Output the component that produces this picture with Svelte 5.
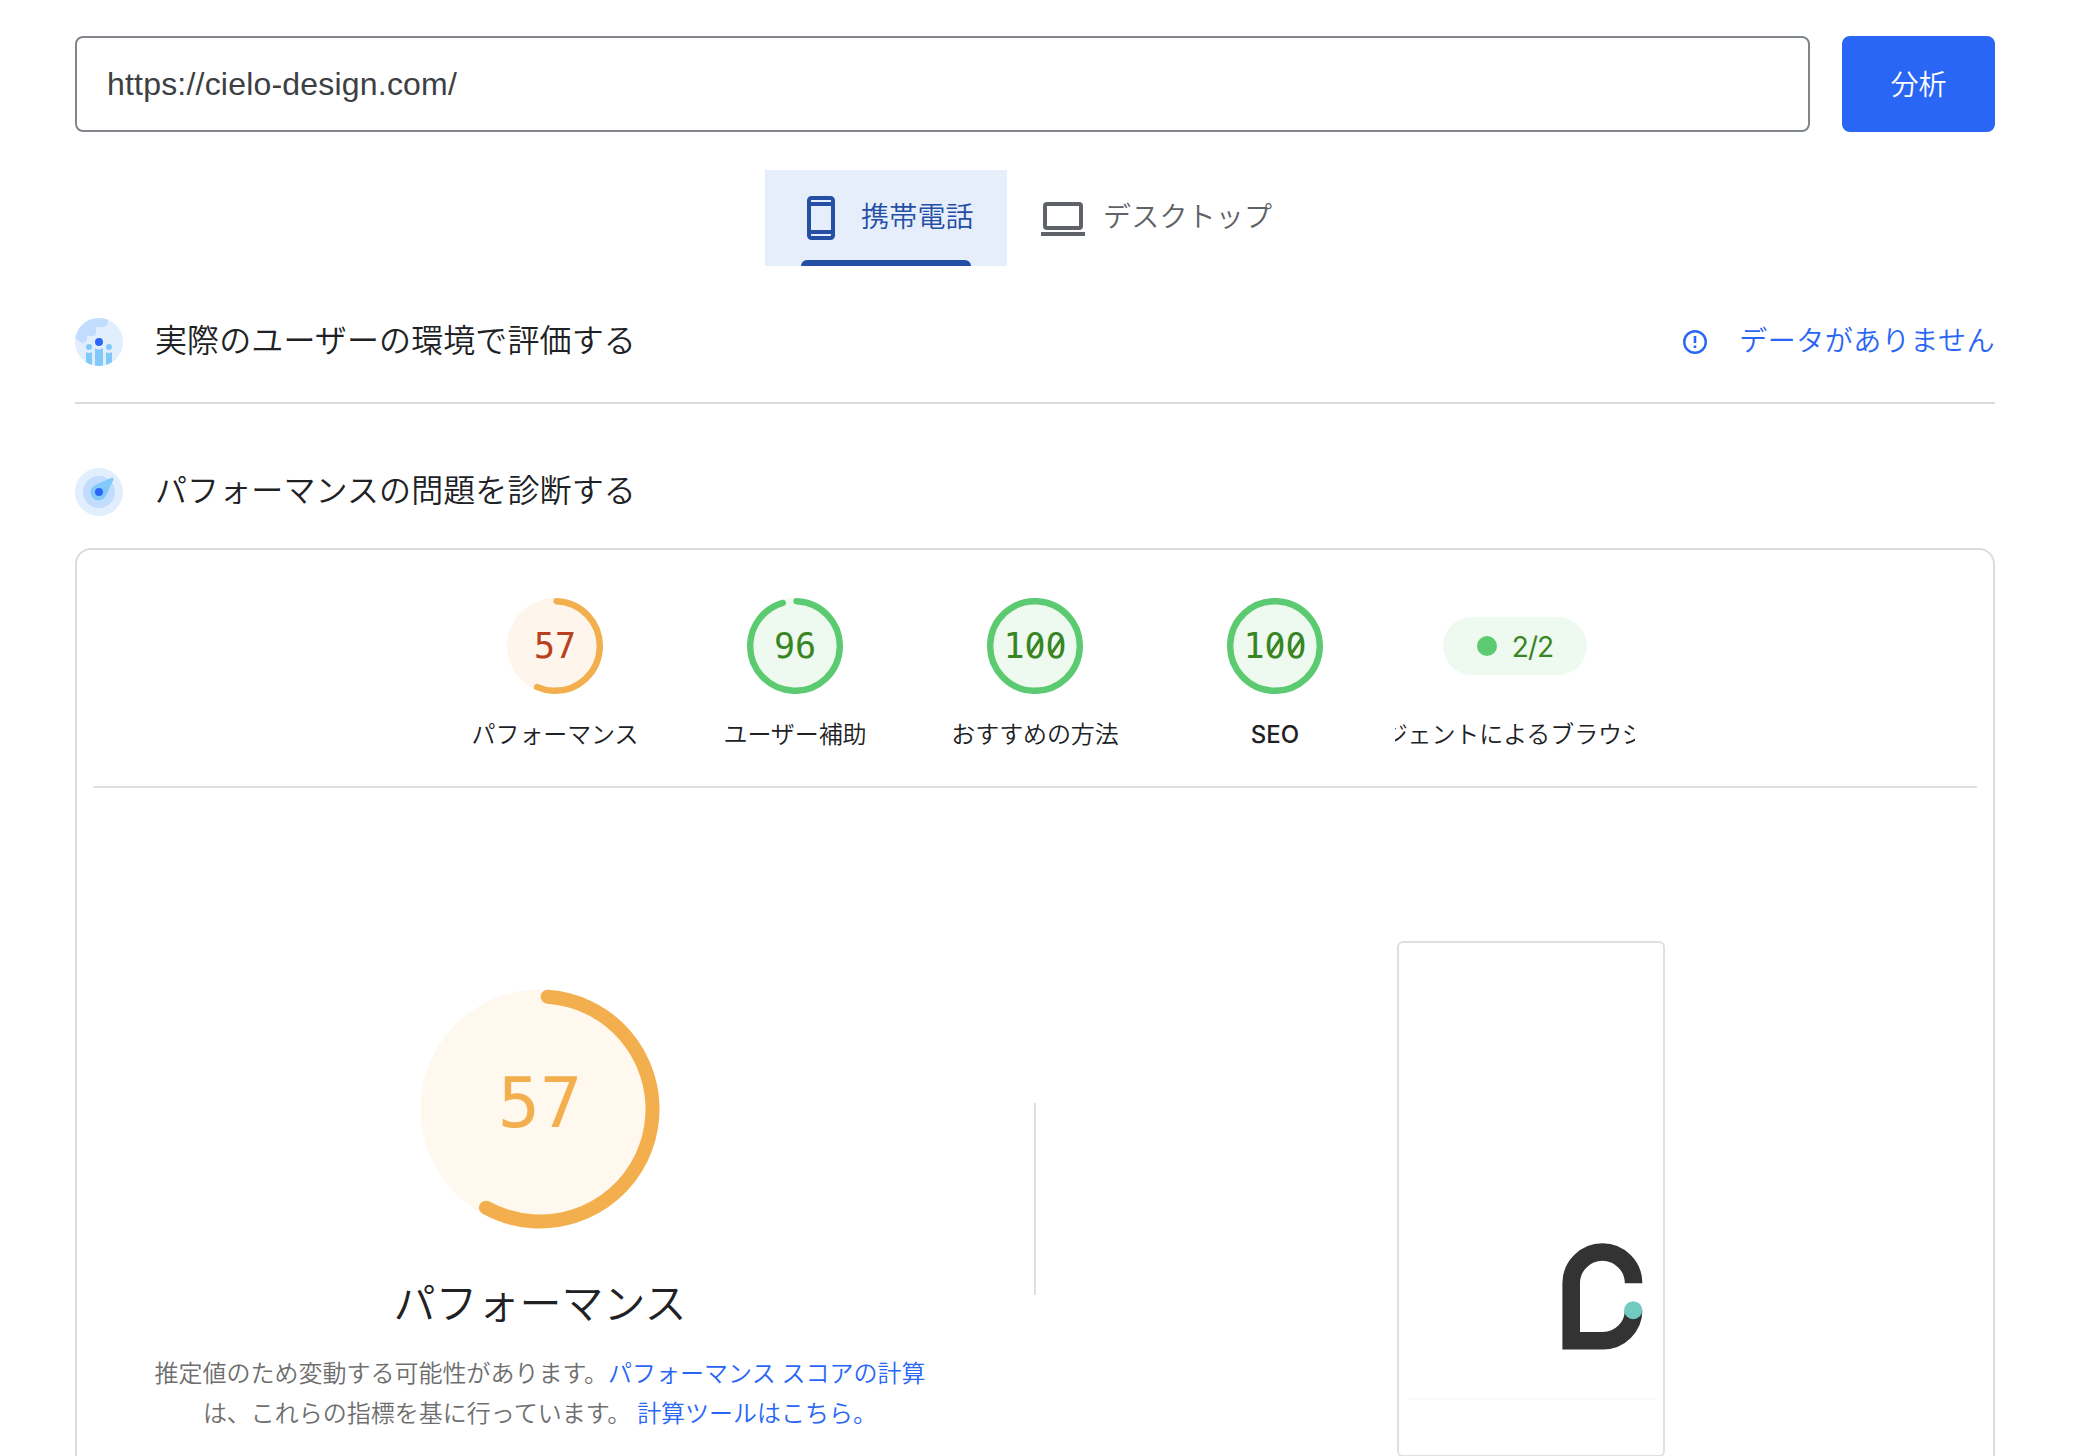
<script>
  const url = 'https://cielo-design.com/';

  const categories = [
    { label: 'パフォーマンス', score: 57 },
    { label: 'ユーザー補助', score: 96 },
    { label: 'おすすめの方法', score: 100 },
    { label: 'SEO', score: 100 },
    { label: 'エージェントによるブラウジング', fraction: '2/2' },
  ];

  const radius = 56;
  const strokeWidth = 8;
  const circumference = 2 * Math.PI * radius;
  const rotation = -90 + ((0.25 * strokeWidth) / circumference) * 360;

  function arcLength(score) {
    if (score === 100) return circumference;
    return (score / 100) * circumference - strokeWidth / 2;
  }

  function rating(score) {
    return score >= 90 ? 'pass' : 'average';
  }
</script>

<main>
  <form class="search">
    <div class="url">{url}</div>
    <button type="button">分析</button>
  </form>

  <nav class="tabs">
    <div class="tab active">
      <svg width="28" height="44" viewBox="0 0 28 44">
        <rect x="2" y="2" width="24" height="40" rx="2.5" fill="none" stroke="currentColor" stroke-width="4" />
        <path d="M2 8h24M2 36h24" stroke="currentColor" stroke-width="4" />
      </svg>
      <span>携帯電話</span>
    </div>
    <div class="tab">
      <svg width="44" height="34" viewBox="0 0 44 34">
        <rect x="4" y="2" width="36" height="24" rx="2" fill="none" stroke="currentColor" stroke-width="4" />
        <path d="M0 32h44" stroke="currentColor" stroke-width="4" />
      </svg>
      <span>デスクトップ</span>
    </div>
  </nav>

  <section class="heading field">
    <svg class="badge" viewBox="0 0 48 48">
      <clipPath id="disc"><circle cx="24" cy="24" r="24" /></clipPath>
      <g clip-path="url(#disc)">
        <rect width="48" height="48" fill="#e1eefe" />
        <path d="M0 0h33v3q0 6-6 6h-6v5q0 4-4 4h-5v4l-4 4L0 20z" fill="#c1dcfc" />
        <g fill="#81c9fa">
          <circle cx="14" cy="29" r="3" />
          <circle cx="34" cy="29" r="3" />
          <path d="M11 34q3 2 6 0v14h-6zM31 34q3 2 6 0v14h-6zM20 30q4 3 8 0v18h-8z" />
        </g>
        <circle cx="24" cy="24" r="4" fill="#2a66f8" />
      </g>
    </svg>
    <h2>実際のユーザーの環境で評価する</h2>
    <div class="no-data">
      <svg width="24" height="24" viewBox="0 0 24 24">
        <circle cx="12" cy="12" r="10.8" fill="none" stroke="currentColor" stroke-width="2.4" />
        <path d="M12 6v7M12 15.6v2.4" stroke="currentColor" stroke-width="2.6" />
      </svg>
      <span>データがありません</span>
    </div>
  </section>

  <section class="heading lab">
    <svg class="badge" viewBox="0 0 48 48">
      <circle cx="24" cy="24" r="24" fill="#e1eefe" />
      <circle cx="24" cy="24" r="16" fill="#c1dcfc" />
      <path d="M38.5 11.4L31 27.5A8 8 0 1 1 20.5 17L36.5 9.8q2.4-.8 2 1.6z" fill="#81c9fa" />
      <circle cx="24" cy="24" r="4" fill="#2a66f8" />
    </svg>
    <h2>パフォーマンスの問題を診断する</h2>
  </section>

  <section class="report">
    <div class="scores">
      {#each categories as category}
        <div class="category">
          {#if category.fraction}
            <div class="fraction"><i></i><span>{category.fraction}</span></div>
          {:else}
            <div class="gauge {rating(category.score)}">
              <svg viewBox="0 0 120 120">
                <circle class="base" cx="60" cy="60" r="60" />
                <circle
                  class="arc"
                  cx="60"
                  cy="60"
                  r={radius}
                  stroke-dasharray="{arcLength(category.score)} {circumference}"
                  transform="rotate({rotation} 60 60)"
                />
              </svg>
              <div class="number">
                {#each String(category.score) as digit}
                  <span class:zero={digit === '0'}>{digit}</span>
                {/each}
              </div>
            </div>
          {/if}
          <div class="label"><span>{category.label}</span></div>
        </div>
      {/each}
    </div>

    <div class="overview">
      <div class="performance">
        <div class="main-gauge">
          <svg viewBox="0 0 240 240">
            <circle cx="120" cy="120" r="119.5" fill="#fff8ee" />
            <circle
              class="arc"
              cx="120"
              cy="120"
              r="112.5"
              stroke-dasharray="401.8 707"
              transform="rotate(-86.1 120 120)"
            />
          </svg>
          <div class="main-number">57</div>
        </div>
        <h3>パフォーマンス</h3>
        <p>
          推定値のため変動する可能性があります。<a href="#score">パフォーマンス スコアの計算</a><br />は、これらの指標を基に行っています。 <a href="#calc">計算ツールはこちら。</a>
        </p>
      </div>
      <div class="divider"></div>
      <div class="preview">
        <svg class="screenshot" viewBox="0 0 264 512">
          <path d="M9 455.5h248" stroke="#f9f9f9" stroke-width="2" />
          <path
            d="M234.6 340.2a31.2 31.2 0 0 0-62.4 0V397.7H204a30.6 30.6 0 0 0 30.6-30.5"
            fill="none"
            stroke="#333"
            stroke-width="17.6"
          />
          <circle cx="234.2" cy="367.2" r="9" fill="#72cbc0" />
        </svg>
      </div>
    </div>
  </section>
</main>

<style>
  :global(body) {
    background: #fff;
    overflow: hidden;
  }

  main {
    box-sizing: border-box;
    width: 2082px;
    height: 1456px;
    padding: 36px 87px 0 75px;
    overflow: hidden;
    color: #202124;
    font-family: Roboto, 'Noto Sans CJK JP', sans-serif;
    font-weight: 350;
  }

  .search {
    display: flex;
    gap: 32px;
    height: 96px;
  }

  .url {
    box-sizing: border-box;
    flex: 1;
    padding: 0 30px;
    border: 2px solid #80868b;
    border-radius: 8px;
    color: #3c4043;
    font: 400 32px/92px 'Liberation Sans', Arial, sans-serif;
    letter-spacing: 0.2px;
  }

  button {
    width: 153px;
    padding: 0 0 2px;
    border: 0;
    border-radius: 8px;
    background: #2a66f6;
    color: #fff;
    font: inherit;
    font-size: 28px;
  }

  .tabs {
    display: flex;
    justify-content: center;
    margin-top: 38px;
    height: 96px;
  }

  .tab {
    position: relative;
    box-sizing: border-box;
    display: flex;
    align-items: center;
    width: 298px;
    padding-left: 34px;
    color: #5f6368;
    font-size: 28px;
    letter-spacing: 0.2px;
  }

  .tab svg {
    margin-top: 2px;
  }

  .tab span {
    height: 96px;
    margin-left: 18px;
    line-height: 96px;
  }

  .tab.active {
    width: 242px;
    padding-left: 42px;
    background: #e6eefb;
    color: #254fa5;
  }

  .tab.active svg {
    margin-top: 0;
  }

  .tab.active span {
    margin-left: 26px;
  }

  .tab.active::after {
    content: '';
    position: absolute;
    left: 36px;
    right: 36px;
    bottom: 0;
    height: 6px;
    border-radius: 6px 6px 0 0;
    background: #254fa5;
  }

  .heading {
    display: flex;
    align-items: center;
  }

  .field {
    box-sizing: border-box;
    height: 138px;
    padding-top: 16px;
    border-bottom: 2px solid #dadce0;
  }

  .lab {
    height: 48px;
    margin-top: 64px;
  }

  .badge {
    width: 48px;
    height: 48px;
  }

  h2 {
    margin: 0 0 2px 32px;
    font-size: 32px;
    font-weight: 350;
    letter-spacing: 0.1px;
    line-height: 48px;
  }

  .no-data {
    display: flex;
    align-items: center;
    gap: 32px;
    margin-left: auto;
    color: #2a66f6;
    font-size: 28px;
    letter-spacing: 0.5px;
  }

  .no-data span {
    padding-bottom: 6px;
  }

  .report {
    box-sizing: border-box;
    height: 1000px;
    margin-top: 32px;
    border: 2px solid #dadce0;
    border-radius: 16px;
    padding: 0 16px;
  }

  .scores {
    display: flex;
    justify-content: center;
    box-sizing: border-box;
    height: 238px;
    padding-top: 48px;
    border-bottom: 2px solid #e0e0e0;
  }

  .category {
    display: flex;
    flex-direction: column;
    align-items: center;
    width: 240px;
  }

  .gauge {
    position: relative;
    width: 96px;
    height: 96px;
    --tone: #5bca70;
    --fill: #eef9f0;
    color: #388523;
  }

  .gauge.average {
    --tone: #f3ae4e;
    --fill: #fef6ec;
    color: #b9401c;
  }

  svg {
    display: block;
    flex: none;
  }

  .base {
    fill: var(--fill);
  }

  .arc {
    fill: none;
    stroke: var(--tone);
    stroke-width: 8;
    stroke-linecap: round;
  }

  .number,
  .main-number {
    position: absolute;
    inset: 0;
    display: flex;
    justify-content: center;
    font-family: 'DejaVu Sans Mono', monospace;
    font-weight: 400;
  }

  .number {
    font-size: 35px;
    line-height: 97px;
  }

  .zero {
    position: relative;
  }

  /* slashed zero: hide the dot, then draw the stroke across the counter */
  .zero::before {
    content: '';
    position: absolute;
    left: 6.5px;
    top: 39px;
    width: 8px;
    height: 18px;
    border-radius: 4px;
    background: var(--fill);
  }

  .zero::after {
    content: '';
    position: absolute;
    left: 9.3px;
    top: 38px;
    width: 2.6px;
    height: 20px;
    background: currentColor;
    transform: rotate(34deg);
  }

  .fraction {
    display: flex;
    align-items: center;
    justify-content: center;
    gap: 15px;
    width: 144px;
    height: 58px;
    margin: 19px 0;
    border-radius: 29px;
    background: #eef9f0;
    color: #388523;
    font-family: Inter, sans-serif;
    font-size: 28px;
    font-weight: 400;
  }

  .fraction span {
    padding-top: 2px;
    letter-spacing: -0.9px;
  }

  .fraction i {
    width: 20px;
    height: 20px;
    border-radius: 50%;
    background: #5bca70;
  }

  .label {
    display: flex;
    justify-content: center;
    width: 240px;
    margin-top: 20px;
    overflow: hidden;
    font-family: Inter, 'Noto Sans CJK JP', sans-serif;
    font-size: 24px;
    line-height: 41px;
    letter-spacing: -0.1px;
    white-space: nowrap;
  }

  .category:nth-child(4) .label {
    font-weight: 500;
    letter-spacing: 0;
  }

  .overview {
    display: flex;
    justify-content: space-between;
  }

  .performance {
    width: 894px;
    padding-top: 201px;
    text-align: center;
  }

  .main-gauge {
    --tone: #f3ae4e;
    position: relative;
    width: 240px;
    margin: 0 auto;
  }

  .main-gauge .arc {
    stroke-width: 14;
  }

  .main-number {
    color: #f3ae4e;
    font-size: 70px;
    line-height: 228px;
  }

  h3 {
    margin: 46px 0 0;
    font-size: 42px;
    font-weight: 350;
    line-height: 60px;
  }

  p {
    margin: 19px 0 0;
    color: #6e6e6e;
    font-size: 24px;
    line-height: 40px;
    white-space: nowrap;
  }

  a {
    color: #2a66f6;
    text-decoration: none;
  }

  .divider {
    width: 2px;
    height: 192px;
    margin-top: 315px;
    background: #e0e0e0;
  }

  .preview {
    box-sizing: border-box;
    width: 894px;
    padding: 153px 0 0 2px;
  }

  .screenshot {
    width: 264px;
    height: 512px;
    margin: 0 auto;
    border: 2px solid #e0e0e0;
    border-radius: 6px;
  }
</style>
